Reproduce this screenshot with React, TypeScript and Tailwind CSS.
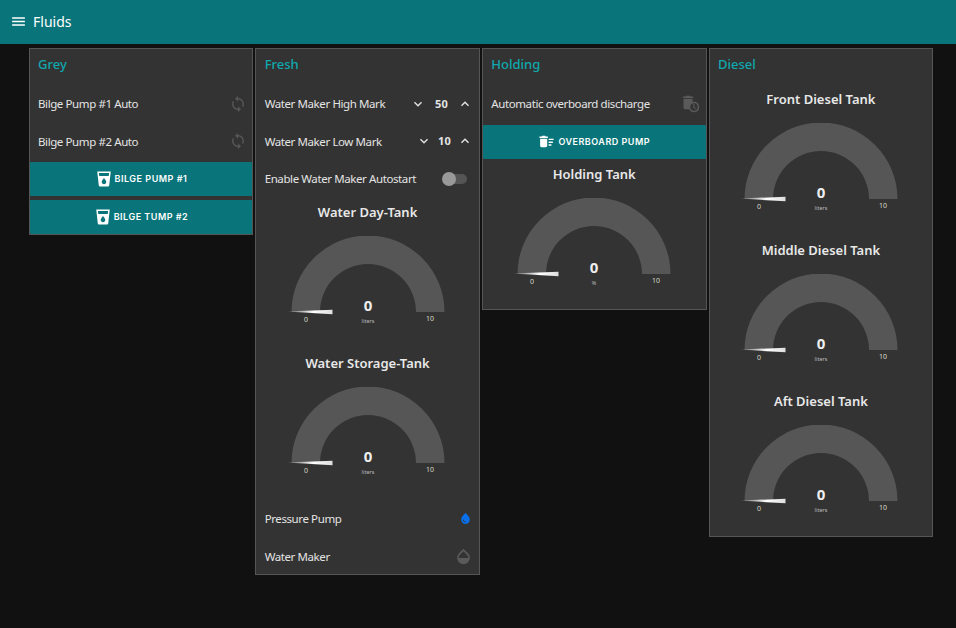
import { MdAutoDelete, MdDeleteSweep, MdKeyboardArrowDown, MdKeyboardArrowUp, MdLocalDrink, MdMenu, MdOpacity, MdSync, MdWaterDrop } from "react-icons/md";
import type { ReactNode } from "react";

const SANS = "font-['Noto_Sans',sans-serif]";
const BUTTON_FONT = "font-['Inter',sans-serif]";

function Panel({ title, height, children }: { title: string; height: string; children: ReactNode }) {
  return (
    <section className={`w-[224.67px] shrink-0 border border-[#555555] bg-[#333333] ${height}`}>
      <h2 className="h-[36.5px] pl-[8.4px] pt-[6px] text-[13px] leading-[18px] font-medium text-[#10a8ae]">{title}</h2>
      {children}
    </section>
  );
}

function Row({ children }: { children: ReactNode }) {
  return <div className="flex h-[37.5px] items-center justify-between pr-[6px] pb-[1px] pl-[8.4px] text-[11.5px] tracking-[-0.4px] text-[#e4e4e4]">{children}</div>;
}

function PumpButton({ icon, label }: { icon: ReactNode; label: string }) {
  return (
    <button
      type="button"
      className={`flex h-[33.5px] w-full items-center justify-center gap-[2px] rounded-[1px] bg-[#097479] text-[9px] font-semibold tracking-[0.5px] text-white ${BUTTON_FONT}`}
    >
      {icon}
      {label}
    </button>
  );
}

function Stepper({ value, width }: { value: number; width: string }) {
  return (
    <div className={`flex items-center justify-between text-[#e4e4e4] ${width}`}>
      <MdKeyboardArrowDown className="text-[16px]" />
      <span className="text-[11px] font-bold tracking-normal">{value}</span>
      <MdKeyboardArrowUp className="text-[16px]" />
    </div>
  );
}

function Gauge({ title, units = "liters" }: { title: string; units?: string }) {
  return (
    <div className="flex flex-col items-center">
      <h3 className="h-[33px] text-[13px] leading-[18px] font-semibold text-[#e8e8e8]">{title}</h3>
      <svg width="190" height="103" viewBox="-2.5 0 190 103" className="block">
        <defs>
          <linearGradient id="needle" x1="0" x2="1" y1="0" y2="0">
            <stop offset="0" stopColor="#ffffff" stopOpacity="0" />
            <stop offset="0.6" stopColor="#ffffff" />
            <stop offset="1" stopColor="#dddddd" />
          </linearGradient>
        </defs>
        <path d="M16 76A76.5 76.5 0 0 1 169 76H140.5A48 48 0 0 0 44.5 76Z" fill="#565656" />
        <path d="M10 75.6L57 73.8V78.2Z" fill="url(#needle)" />
        <text x="92.5" y="75" textAnchor="middle" fontSize="15" fontWeight="700" fill="#eeeeee">0</text>
        <text x="92.5" y="87" textAnchor="middle" fontSize="5.5" fill="#bbbbbb">{units}</text>
        <text x="30.5" y="86" textAnchor="middle" fontSize="7" fill="#d8d8c8">0</text>
        <text x="154.5" y="85" textAnchor="middle" fontSize="7" fill="#d8d8c8">10</text>
      </svg>
    </div>
  );
}

export default function App() {
  const pumpIcon = <MdLocalDrink className="text-[18px]" />;
  return (
    <div className={`h-[628px] w-[956px] overflow-hidden bg-[#111111] ${SANS}`}>
      <header className="flex h-[44px] items-center gap-[6px] bg-[#097479] pb-[2px] pl-[10px] text-white">
        <MdMenu className="text-[17px]" />
        <span className="text-[14px]">Fluids</span>
      </header>
      <main className="flex items-start gap-[2px] pt-[4px] pl-[28.6px]">
        <Panel title="Grey" height="h-[187px]">
          <Row>
            Bilge Pump #1 Auto
            <MdSync className="mr-[-1px] text-[18px] text-[#555555]" />
          </Row>
          <Row>
            Bilge Pump #2 Auto
            <MdSync className="mr-[-1px] text-[18px] text-[#555555]" />
          </Row>
          <div className="flex flex-col gap-[4.5px] pt-[1.5px]">
            <PumpButton icon={pumpIcon} label="BILGE PUMP #1" />
            <PumpButton icon={pumpIcon} label="BILGE TUMP #2" />
          </div>
        </Panel>
        <Panel title="Fresh" height="h-[527px]">
          <Row>
            Water Maker High Mark
            <Stepper value={50} width="w-[63px]" />
          </Row>
          <Row>
            Water Maker Low Mark
            <Stepper value={10} width="w-[57px]" />
          </Row>
          <Row>
            Enable Water Maker Autostart
            <span className="relative mr-[6px] h-[10px] w-[24px] rounded-full bg-[#555555]">
              <span className="absolute top-[-2px] left-[-1px] size-[14px] rounded-full bg-[#999999]" />
            </span>
          </Row>
          <div className="flex flex-col gap-[15px] pt-[5px]">
            <Gauge title="Water Day-Tank" />
            <Gauge title="Water Storage-Tank" />
          </div>
          <div className="pt-[10.5px]">
            <Row>
              Pressure Pump
              <MdWaterDrop className="mr-[1px] text-[13px] text-[#0a6fe8]" />
            </Row>
            <Row>
              Water Maker
              <MdOpacity className="text-[19px] text-[#5a5a5a]" />
            </Row>
          </div>
        </Panel>
        <Panel title="Holding" height="h-[262px]">
          <Row>
            Automatic overboard discharge
            <MdAutoDelete className="text-[18px] text-[#5a5a5a]" />
          </Row>
          <div className="pt-[2px]">
            <PumpButton icon={<MdDeleteSweep className="mr-[1px] text-[17px]" />} label="OVERBOARD PUMP" />
          </div>
          <div className="pt-[6.5px]">
            <Gauge title="Holding Tank" units="%" />
          </div>
        </Panel>
        <Panel title="Diesel" height="h-[489px]">
          <div className="flex flex-col gap-[15px] pt-[4px]">
            <Gauge title="Front Diesel Tank" />
            <Gauge title="Middle Diesel Tank" />
            <Gauge title="Aft Diesel Tank" />
          </div>
        </Panel>
      </main>
    </div>
  );
}
